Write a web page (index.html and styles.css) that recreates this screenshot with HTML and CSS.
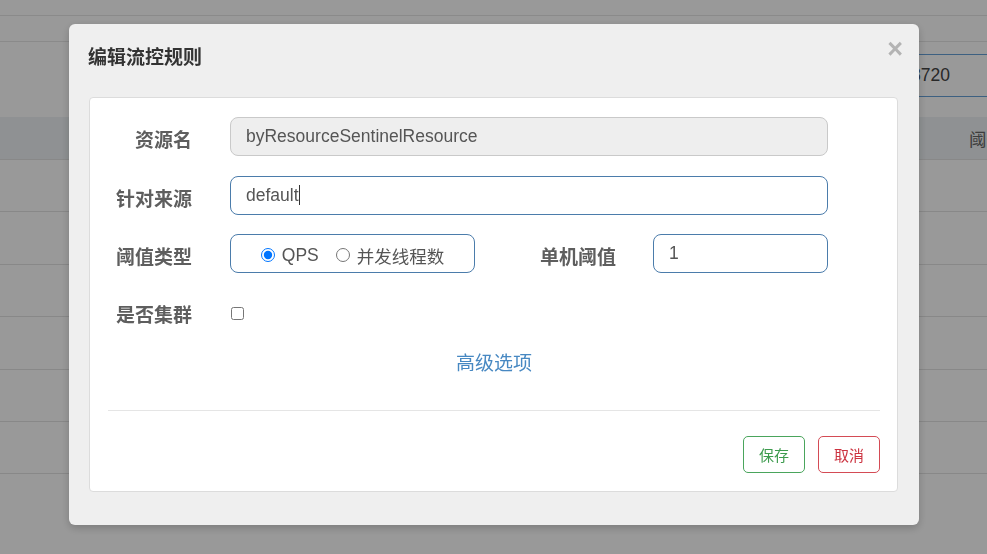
FILE: index.html
```html
<!DOCTYPE html>
<html lang="zh-CN">

<head>
    <meta charset="UTF-8">
    <meta name="viewport" content="width=device-width, initial-scale=1.0">
    <title>编辑流控规则</title>
    <link rel="stylesheet" href="styles.css">
</head>

<body>
    <!-- 背景页面 -->
    <div class="page">
        <div class="topbar"></div>
        <div class="subbar"></div>
        <div class="toolbar">
            <div class="search">localhost:8720</div>
        </div>
        <div class="rules">
            <div class="rules-head">
                <span>资源名</span>
                <span>来源应用</span>
                <span>流控模式</span>
                <span>阈值类型</span>
            </div>
            <div class="rules-row"></div>
            <div class="rules-row"></div>
            <div class="rules-row"></div>
            <div class="rules-row"></div>
            <div class="rules-row"></div>
            <div class="rules-row"></div>
        </div>
    </div>

    <div class="backdrop"></div>

    <!-- 弹窗 -->
    <div class="modal">
        <div class="modal-header">
            <h4 class="modal-title">编辑流控规则</h4>
            <span class="close">&times;</span>
        </div>

        <div class="panel">
            <div class="form-row">
                <label class="form-label">资源名</label>
                <input class="form-input" type="text" value="byResourceSentinelResource" disabled>
            </div>
            <div class="form-row">
                <label class="form-label">针对来源</label>
                <div class="form-input active">default<span class="caret"></span></div>
            </div>
            <div class="form-row">
                <label class="form-label">阈值类型</label>
                <div class="radio-group">
                    <label class="radio"><input type="radio" name="grade" checked>QPS</label>
                    <label class="radio"><input type="radio" name="grade">并发线程数</label>
                </div>
                <label class="form-label wide">单机阈值</label>
                <input class="form-input short" type="text" value="1">
            </div>
            <div class="form-row check-row">
                <label class="form-label">是否集群</label>
                <input class="check" type="checkbox">
            </div>

            <div class="advanced"><a href="#">高级选项</a></div>

            <hr class="divider">

            <div class="actions">
                <button class="btn btn-save">保存</button>
                <button class="btn btn-cancel">取消</button>
            </div>
        </div>
    </div>
</body>

</html>
```

FILE: styles.css
```css
/* 基本設定 */
body {
    margin: 0;
    font-family: "Liberation Sans", "Noto Sans CJK SC", sans-serif;
    background-color: #fff;
    color: #333;
    overflow: hidden;
}

/* 背景頁面 */
.page {
    width: 987px;
    height: 554px;
}

.topbar {
    height: 15px;
    border-bottom: 1px solid #e6e6e6;
}

.subbar {
    height: 25px;
    border-bottom: 1px solid #e6e6e6;
}

.toolbar {
    height: 75px;
    display: flex;
    justify-content: flex-end;
    align-items: flex-start;
}

.search {
    margin-top: 12px;
    width: 260px;
    height: 41px;
    border-top: 1px solid #66a0d8;
    border-bottom: 1px solid #66a0d8;
    box-sizing: content-box;
    padding-right: 37px;
    text-align: right;
    line-height: 41px;
    font-size: 17.5px;
    color: #444;
}

.rules-head {
    height: 42px;
    background-color: #eef2f5;
    border-bottom: 1px solid #e3e3e3;
    display: grid;
    grid-template-columns: 230px 240px 240px 1fr;
    padding-left: 259px;
    align-items: center;
    font-size: 17.5px;
    color: #666;
    white-space: nowrap;
    overflow: hidden;
}

.rules-row {
    height: 51.4px;
    border-bottom: 1px solid #e3e3e3;
}

.backdrop {
    position: fixed;
    inset: 0;
    background-color: rgba(0, 0, 0, 0.4);
}

/* 弹窗 */
.modal {
    position: fixed;
    left: 69px;
    top: 24px;
    width: 850px;
    box-sizing: border-box;
    background-color: #efefef;
    border-radius: 6px;
    padding: 0 21px 33px 20px;
    box-shadow: 0 3px 9px rgba(0, 0, 0, 0.2);
}

.modal-header {
    display: flex;
    justify-content: space-between;
    align-items: flex-start;
    padding: 20px 0 26px 0;
}

.modal-title {
    margin: 0 0 0 -1px;
    font-size: 19px;
    line-height: 27px;
    font-weight: bold;
    color: #333;
}

.close {
    font-family: "Liberation Sans", sans-serif;
    font-size: 27px;
    line-height: 1;
    font-weight: bold;
    color: #b3b3b3;
    margin: -8px -5px 0 0;
    cursor: pointer;
}

.panel {
    background-color: #fff;
    border: 1px solid #dcdcdc;
    border-radius: 4px;
    padding: 19px 17px 18px 18px;
}

.form-row {
    display: flex;
    align-items: center;
    height: 39px;
    margin-bottom: 19px;
}

.form-row:first-child {
    margin-bottom: 20px;
}

.form-label {
    width: 84px;
    flex-shrink: 0;
    text-align: right;
    margin-right: 38px;
    padding-top: 4px;
    font-size: 19px;
    font-weight: bold;
    color: #5e5e5e;
    white-space: nowrap;
}

.form-label.wide {
    width: 141px;
    margin-right: 37px;
}

.form-input {
    width: 598px;
    height: 39px;
    box-sizing: border-box;
    padding: 0 15px;
    border: 1px solid #4b7cab;
    border-radius: 8px;
    background-color: #fff;
    font-family: inherit;
    font-size: 17.5px;
    color: #555;
    line-height: 37px;
    outline: none;
}

.form-input:disabled {
    background-color: #eee;
    border-color: #c9c9c9;
    color: #555;
}

.form-input.short {
    width: 175px;
}

.caret {
    display: inline-block;
    width: 1px;
    height: 20px;
    background-color: #333;
    vertical-align: -4px;
}

.radio-group {
    width: 245px;
    height: 39px;
    box-sizing: border-box;
    border: 1px solid #4b7cab;
    border-radius: 8px;
    display: flex;
    align-items: center;
    justify-content: center;
    gap: 17px;
    font-size: 17.5px;
    color: #555;
}

.radio {
    display: flex;
    align-items: center;
    padding-top: 3px;
}

.radio input {
    margin: 0 7px 0 0;
    width: 14px;
    height: 14px;
}

.check-row {
    margin-top: 3px;
}

.check {
    margin: 4px 0 0 1px;
    width: 13px;
    height: 13px;
}

.advanced {
    text-align: center;
    margin-top: 1px;
    font-size: 19px;
    line-height: 27px;
}

.advanced a {
    color: #4788c2;
    text-decoration: none;
}

.divider {
    border: none;
    border-top: 1px solid #e5e5e5;
    margin: 33px 0 25px 0;
}

.actions {
    display: flex;
    justify-content: flex-end;
    gap: 13px;
}

.btn {
    width: 62px;
    height: 37px;
    border-radius: 5px;
    background-color: #fff;
    font-family: inherit;
    font-size: 15px;
    cursor: pointer;
}

.btn-save {
    border: 1px solid #4aa55c;
    color: #3d9b4e;
}

.btn-cancel {
    border: 1px solid #d44b55;
    color: #cc3340;
}
```
